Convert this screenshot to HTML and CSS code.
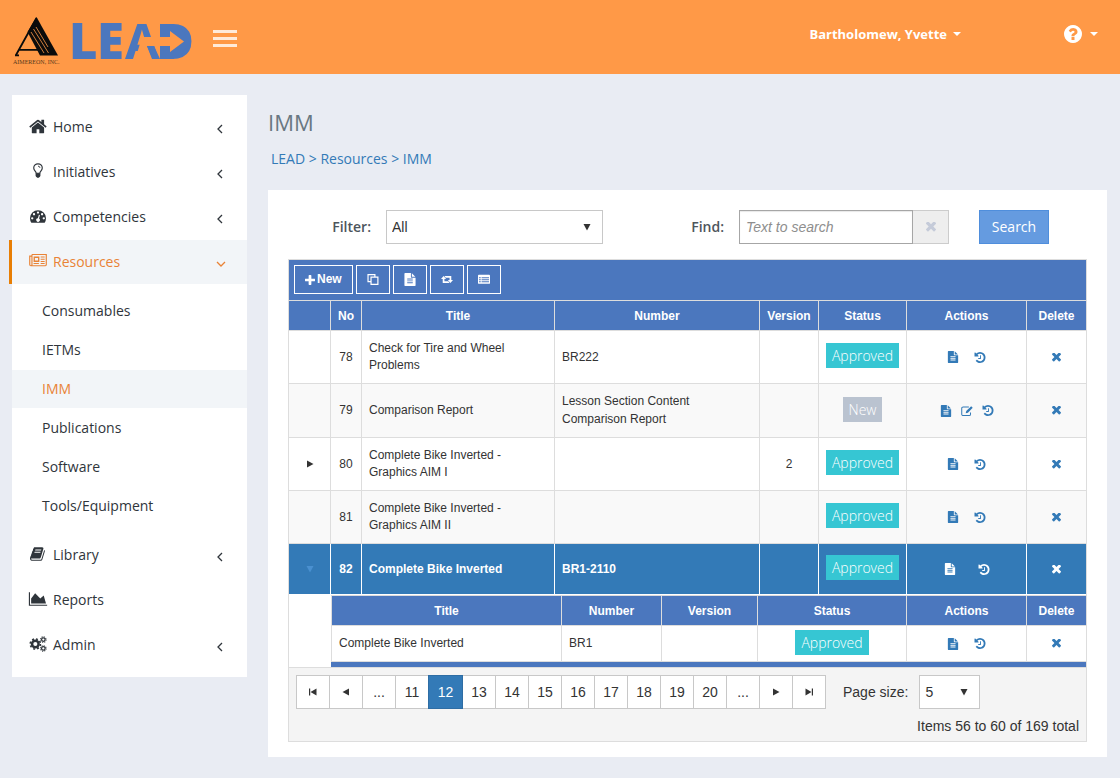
FILE: index.html
```html
<!DOCTYPE html>
<html lang="en">
<head>
<meta charset="utf-8">
<title>IMM - LEAD</title>
<link rel="stylesheet" href="styles.css">
</head>
<body>
<svg class="sprite" aria-hidden="true">
  <symbol id="i-home" viewBox="60 100 1680 1500"><path d="M1472 992v480q0 26-19 45t-45 19h-384v-384h-256v384h-384q-26 0-45-19t-19-45v-480q0-1 .5-3t.5-3l575-474 575 474q1 2 1 6zm223-69l-62 74q-8 9-21 11h-3q-13 0-21-7l-692-577-692 577q-12 8-24 7-13-2-21-11l-62-74q-8-10-7-23.500t11-21.500l719-599q32-26 76-26t76 26l244 204v-195q0-14 9-23t23-9h192q14 0 23 9t9 23v408l219 182q10 8 11 21.500t-7 23.500z"/></symbol>
  <symbol id="i-bulb" viewBox="0 0 20 18"><path fill="none" stroke="currentColor" stroke-width="1.300" d="M8 11.500C7.800 9.500 5.200 8.500 5.200 5.600a4.800 4.700 0 0 1 9.600 0c0 2.900-2.600 3.900-2.800 5.900z"/><path fill="none" stroke="currentColor" d="M10 3.500q2 0 2.200 2"/><path d="M7.300 11.500h5.400v3.200l-1 1.300h-.7l-.5.800h-1l-.5-.8h-.7l-1-1.300z"/></symbol>
  <symbol id="i-dash" viewBox="0 0 20 18"><path fill-rule="evenodd" d="M2.500 16.500A9 9 0 0 1 1 11.500a9 9 0 0 1 18 0 9 9 0 0 1-1.500 5zM3.500 10.300a1.300 1.300 0 1 0 0 2.600 1.300 1.300 0 0 0 0-2.600zM5.500 5.700a1.300 1.300 0 1 0 0 2.600 1.300 1.300 0 0 0 0-2.600zM10 3.800a1.300 1.300 0 1 0 0 2.600 1.300 1.300 0 0 0 0-2.600zM14.600 5.700a1.300 1.300 0 1 0 0 2.600 1.300 1.300 0 0 0 0-2.600zM16.500 10.300a1.300 1.300 0 1 0 0 2.600 1.300 1.300 0 0 0 0-2.600zM11 7.500l-1.100 4a2 2 0 1 0 1.300.4l1-4z"/></symbol>
  <symbol id="i-news" viewBox="0 0 20 18"><path fill="none" stroke="currentColor" stroke-width="1.300" d="M3.200 1.700h16.100v11.600a1 1 0 0 1-1 1H2a1.300 1.300 0 0 1-1.300-1.300V3.500h2.500M3.200 1.700V13a1.200 1.200 0 0 1-1.200 1.300"/><path fill="none" stroke="currentColor" stroke-width="1.500" d="M5.800 4.800h5v4.500h-5z"/><path fill="none" stroke="currentColor" stroke-width="1.200" d="M13 4.500h4.500M13 7h4.500M13 9.500h4.500M5 11.800h6M13 11.800h4.500"/></symbol>
  <symbol id="i-book" viewBox="0 0 1792 1792"><path d="M1639 478q40 57 18 129l-275 906q-19 64-76.500 107.500t-122.500 43.500h-923q-77 0-148.500-53.500t-99.500-131.500q-24-67-2-127 0-4 3-27t4-37q1-8-3-21.500t-3-19.500q2-11 8-21t16.500-23.500 16.500-23.500q23-38 45-91.500t30-91.500q3-10 .5-30t-.5-28q3-11 17-28t17-23q21-36 42-92t25-90q1-9-2.500-32t.5-28q4-13 22-30.500t22-22.500q19-26 42.500-84.500t27.500-96.500q1-8-3-25.500t-2-26.500q2-8 9-18t18-23 17-21q8-12 16.500-30.500t15-35 16-36 19.500-32 26.500-23.500 36-11.500 47.500 5.500l-1 3q38-9 51-9h761q74 0 114 56t18 130l-274 906q-36 119-71.500 153.500t-128.500 34.500h-869q-27 0-38 15-11 16-1 43 24 70 144 70h923q29 0 56-15.500t35-41.500l300-987q7-22 5-57 38 15 59 43zm-1064 2q-4 13 2 22.500t20 9.500h608q13 0 25.500-9.500t16.500-22.500l21-64q4-13-2-22.500t-20-9.500h-608q-13 0-25.500 9.500t-16.500 22.500zm-83 256q-4 13 2 22.500t20 9.500h608q13 0 25.500-9.500t16.500-22.500l21-64q4-13-2-22.500t-20-9.500h-608q-13 0-25.500 9.500t-16.500 22.500z"/></symbol>
  <symbol id="i-area" viewBox="0 0 2048 1792"><path d="M2048 1536v128h-2048v-1536h128v1408h1920zm-384-1024l256 896h-1664v-576l448-576 576 576z"/></symbol>
  <symbol id="i-cogs" viewBox="0 0 20 18"><circle cx="7" cy="9" r="3.700" fill="none" stroke="currentColor" stroke-width="2.800"/><circle cx="7" cy="9" r="5.700" fill="none" stroke="currentColor" stroke-width="1.800" stroke-dasharray="2.240 2.240"/><circle cx="16" cy="4" r="2" fill="none" stroke="currentColor" stroke-width="1.400"/><circle cx="16" cy="4" r="3.100" fill="none" stroke="currentColor" stroke-width="1.200" stroke-dasharray="1.220 1.220"/><circle cx="16" cy="14" r="2" fill="none" stroke="currentColor" stroke-width="1.400"/><circle cx="16" cy="14" r="3.100" fill="none" stroke="currentColor" stroke-width="1.200" stroke-dasharray="1.220 1.220"/></symbol>
  <symbol id="i-left" viewBox="0 0 10 10"><path fill="none" stroke="currentColor" stroke-width="1.300" d="M7 1L3 5l4 4"/></symbol>
  <symbol id="i-down" viewBox="0 0 10 10"><path fill="none" stroke="currentColor" stroke-width="1.300" d="M1 3l4 4 4-4"/></symbol>
  <symbol id="i-caret" viewBox="0 0 8 4"><path d="M0 0h8L4 4z"/></symbol>
  <symbol id="i-help" viewBox="128 128 1536 1536"><path d="M1024 1376v-192q0-14-9-23t-23-9h-192q-14 0-23 9t-9 23v192q0 14 9 23t23 9h192q14 0 23-9t9-23zm256-672q0-88-55.500-163t-138.500-116-170-41q-243 0-371 213-15 24 8 42l132 100q7 6 19 6 16 0 25-12 53-68 86-92 34-24 86-24 48 0 85.500 26t37.500 59q0 38-20 61t-68 45q-63 28-115.500 86.500t-52.500 125.500v36q0 14 9 23t23 9h192q14 0 23-9t9-23q0-19 21.500-49.500t54.500-49.500q32-18 49-28.500t46-35 44.500-48 28-60.500 12.500-81zm384 192q0 209-103 385.500t-279.500 279.500-385.500 103-385.500-103-279.500-279.500-103-385.500 103-385.500 279.500-279.500 385.500-103 385.500 103 279.500 279.500 103 385.500z"/></symbol>
  <symbol id="i-plus" viewBox="192 128 1408 1408"><path d="M1600 736v192q0 40-28 68t-68 28h-416v416q0 40-28 68t-68 28h-192q-40 0-68-28t-28-68v-416h-416q-40 0-68-28t-28-68v-192q0-40 28-68t68-28h416v-416q0-40 28-68t68-28h192q40 0 68 28t28 68v416h416q40 0 68 28t28 68z"/></symbol>
  <symbol id="i-times" viewBox="302 434 1188 1188"><path d="M1490 1322q0 40-28 68l-136 136q-28 28-68 28t-68-28l-294-294-294 294q-28 28-68 28t-68-28l-136-136q-28-28-28-68t28-68l294-294-294-294q-28-28-28-68t28-68l136-136q28-28 68-28t68 28l294 294 294-294q28-28 68-28t68 28l136 136q28 28 28 68t-28 68l-294 294 294 294q28 28 28 68z"/></symbol>
  <symbol id="i-file" viewBox="128 0 1536 1792"><path d="M1596 476q14 14 28 36h-472v-472q22 14 36 28zm-476 164h544v1056q0 40-28 68t-68 28h-1344q-40 0-68-28t-28-68v-1600q0-40 28-68t68-28h800v544q0 40 28 68t68 28zm160 736v-64q0-14-9-23t-23-9h-704q-14 0-23 9t-9 23v64q0 14 9 23t23 9h704q14 0 23-9t9-23zm0-256v-64q0-14-9-23t-23-9h-704q-14 0-23 9t-9 23v64q0 14 9 23t23 9h704q14 0 23-9t9-23zm0-256v-64q0-14-9-23t-23-9h-704q-14 0-23 9t-9 23v64q0 14 9 23t23 9h704q14 0 23-9t9-23z"/></symbol>
  <symbol id="i-history" viewBox="128 128 1536 1536"><path d="M1664 896q0 156-61 298t-164 245-245 164-298 61q-172 0-327-72.500t-264-204.500q-7-10-6.500-22.500t8.500-20.500l137-138q10-9 25-9 16 2 23 12 73 95 179 147t225 52q104 0 198.500-40.500t163.500-109.500 109.500-163.500 40.500-198.500-40.500-198.500-109.500-163.500-163.500-109.500-198.500-40.500q-98 0-188 35.500t-160 101.500l137 138q31 30 14 69-17 40-59 40h-448q-26 0-45-19t-19-45v-448q0-42 40-59 39-17 69 14l130 129q107-101 244.500-156.500t284.500-55.500q156 0 298 61t245 164 164 245 61 298zm-640-288v448q0 14-9 23t-23 9h-320q-14 0-23-9t-9-23v-64q0-14 9-23t23-9h224v-352q0-14 9-23t23-9h64q14 0 23 9t9 23z"/></symbol>
  <symbol id="i-edit" viewBox="0 0 13 12"><path fill="none" stroke="currentColor" stroke-width="1.100" d="M8.500 1.600H2.300A1.500 1.500 0 0 0 .8 3.100v6.300a1.500 1.500 0 0 0 1.500 1.500h6.500a1.500 1.500 0 0 0 1.500-1.500V7.500"/><path d="M11 .8l1.700 1.700-5.200 5.300-2.400.7.600-2.500z"/></symbol>
  <symbol id="i-copy" viewBox="0 0 14 14"><path fill="none" stroke="currentColor" stroke-width="1.400" d="M4.700 4.200h8v8.500h-8zM4.500 9.500H1.200V1.200h8v2.500"/></symbol>
  <symbol id="i-retweet" viewBox="0 0 14 10"><path d="M3 1l3 3.500H4V7h4.500l1.500 2H2V4.500H0zM11 9L8 5.500h2V3H5.500L4 1h8v4.500h2z"/></symbol>
  <symbol id="i-list" viewBox="0 0 14 12"><path fill-rule="evenodd" d="M1 .5h12a1 1 0 0 1 1 1v8.500a1 1 0 0 1-1 1H1a1 1 0 0 1-1-1V1.500a1 1 0 0 1 1-1zM1.200 3.500v1h2v-1zm3 0v1h8.600v-1zm-3 2.300v1h2v-1zm3 0v1h8.600v-1zm-3 2.300v1h2v-1zm3 0v1h8.600v-1z"/></symbol>
  <symbol id="i-tri-d" viewBox="0 0 8 8"><path d="M.5 1h7L4 7.500z"/></symbol>
  <symbol id="i-tri-r" viewBox="0 0 8 8"><path d="M1 .5v7L7.500 4z"/></symbol>
  <symbol id="i-tri-l" viewBox="0 0 8 8"><path d="M7 .5v7L.5 4z"/></symbol>
  <symbol id="i-first" viewBox="0 0 8 8"><path d="M0 .5h1.200v7H0zM7.500.5v7L1.500 4z"/></symbol>
  <symbol id="i-last" viewBox="0 0 8 8"><path d="M8 .5H6.800v7H8zM.5.5v7l6-3.500z"/></symbol>
</svg>

<header class="topbar">
  <a class="brand" href="#" aria-label="Aimereon LEAD">
    <svg class="brand-mark" viewBox="0 0 48 52">
      <path fill="#0b0b0b" d="M23.500 2L45 40.500H27L14.500 17z"/>
      <path fill="none" stroke="#0b0b0b" stroke-width="1.800" d="M23.500 3L3 40M6 34.800h20M2 40.300h4"/>
      <path fill="none" stroke="#ff9947" stroke-width=".8" d="M18 17l13 21M20.500 14l15 24M23 12l12 20"/>
      <text x="0" y="49" font-family="Liberation Serif, serif" font-size="6" fill="#5a3a1c">AIMEREON, INC.</text>
    </svg>
    <svg class="brand-word" viewBox="0 0 120 36">
      <g fill="#4b77be" font-family="Open Sans, sans-serif" font-weight="800" font-size="49">
        <text x="-4" y="35">L</text><text x="24" y="35">E</text><text x="52" y="35" font-weight="700">A</text><text x="85" y="35" font-weight="700">D</text>
      </g>
      <path fill="#4b77be" d="M87 0h14v35H87zM96 4h12l5 8v12l-5 7H96z"/>
      <path fill="#ff9947" d="M69 13h28V7l14 10.500L97 28v-6H74l6 14H62z"/>
      <path fill="#4b77be" d="M74 22h7l6 13h-8z"/>
    </svg>
  </a>
  <button class="menu-toggle" type="button" aria-label="Toggle menu"><span></span><span></span><span></span></button>
  <button class="user-menu" type="button">Bartholomew, Yvette <svg class="caret"><use href="#i-caret"/></svg></button>
  <button class="help-menu" type="button" aria-label="Help"><svg class="help-icon"><use href="#i-help"/></svg><svg class="caret"><use href="#i-caret"/></svg></button>
</header>

<div class="layout">
  <nav class="sidebar">
    <a class="nav-item" href="#"><svg class="nav-icon"><use href="#i-home"/></svg><span>Home</span><svg class="chev"><use href="#i-left"/></svg></a>
    <a class="nav-item" href="#"><svg class="nav-icon"><use href="#i-bulb"/></svg><span>Initiatives</span><svg class="chev"><use href="#i-left"/></svg></a>
    <a class="nav-item" href="#"><svg class="nav-icon"><use href="#i-dash"/></svg><span>Competencies</span><svg class="chev"><use href="#i-left"/></svg></a>
    <a class="nav-item active" href="#"><svg class="nav-icon"><use href="#i-news"/></svg><span>Resources</span><svg class="chev"><use href="#i-down"/></svg></a>
    <div class="subnav">
      <a href="#">Consumables</a>
      <a href="#">IETMs</a>
      <a class="current" href="#">IMM</a>
      <a href="#">Publications</a>
      <a href="#">Software</a>
      <a href="#">Tools/Equipment</a>
    </div>
    <a class="nav-item" href="#"><svg class="nav-icon"><use href="#i-book"/></svg><span>Library</span><svg class="chev"><use href="#i-left"/></svg></a>
    <a class="nav-item" href="#"><svg class="nav-icon"><use href="#i-area"/></svg><span>Reports</span></a>
    <a class="nav-item" href="#"><svg class="nav-icon"><use href="#i-cogs"/></svg><span>Admin</span><svg class="chev"><use href="#i-left"/></svg></a>
  </nav>

  <main class="content">
    <h1>IMM</h1>
    <div class="crumbs"><a href="#">LEAD</a> &gt; <a href="#">Resources</a> &gt; <a href="#">IMM</a></div>
    <section class="card">
      <form class="filters">
        <label for="filter">Filter:</label>
        <div class="select-box"><select id="filter"><option>All</option></select><svg class="tri"><use href="#i-tri-d"/></svg></div>
        <label for="find">Find:</label>
        <div class="find-box"><input id="find" type="text" placeholder="Text to search"><button type="button" aria-label="Clear"><svg class="clear-icon"><use href="#i-times"/></svg></button></div>
        <button class="search" type="button">Search</button>
      </form>

      <div class="grid">
        <div class="toolbar">
          <button type="button"><svg class="plus-icon"><use href="#i-plus"/></svg>New</button>
          <button type="button" aria-label="Copy"><svg class="tool-icon"><use href="#i-copy"/></svg></button>
          <button type="button" aria-label="View"><svg class="tool-icon"><use href="#i-file"/></svg></button>
          <button type="button" aria-label="Convert"><svg class="tool-icon"><use href="#i-retweet"/></svg></button>
          <button type="button" aria-label="List"><svg class="tool-icon"><use href="#i-list"/></svg></button>
        </div>
        <table class="data">
          <colgroup><col class="c-exp"><col class="c-no"><col class="c-title"><col><col class="c-ver"><col class="c-status"><col class="c-act"><col class="c-del"></colgroup>
          <thead><tr><th></th><th>No</th><th>Title</th><th>Number</th><th>Version</th><th>Status</th><th>Actions</th><th>Delete</th></tr></thead>
          <tbody>
            <tr>
              <td></td><td class="mid">78</td><td class="title">Check for Tire and Wheel Problems</td><td>BR222</td><td></td>
              <td class="mid status"><span class="badge">Approved</span></td>
              <td><div class="acts"><button type="button" aria-label="View"><svg><use href="#i-file"/></svg></button><button type="button" aria-label="History"><svg><use href="#i-history"/></svg></button></div></td>
              <td class="mid"><button class="del" type="button" aria-label="Delete"><svg><use href="#i-times"/></svg></button></td>
            </tr>
            <tr class="alt">
              <td></td><td class="mid">79</td><td class="title">Comparison Report</td><td class="number">Lesson Section Content Comparison Report</td><td></td>
              <td class="mid status"><span class="badge new">New</span></td>
              <td><div class="acts three"><button type="button" aria-label="View"><svg><use href="#i-file"/></svg></button><button type="button" aria-label="Edit"><svg><use href="#i-edit"/></svg></button><button type="button" aria-label="History"><svg><use href="#i-history"/></svg></button></div></td>
              <td class="mid"><button class="del" type="button" aria-label="Delete"><svg><use href="#i-times"/></svg></button></td>
            </tr>
            <tr>
              <td class="mid"><button class="exp" type="button" aria-label="Expand"><svg><use href="#i-tri-r"/></svg></button></td><td class="mid">80</td><td class="title">Complete Bike Inverted - Graphics AIM I</td><td></td><td class="mid">2</td>
              <td class="mid status"><span class="badge">Approved</span></td>
              <td><div class="acts"><button type="button" aria-label="View"><svg><use href="#i-file"/></svg></button><button type="button" aria-label="History"><svg><use href="#i-history"/></svg></button></div></td>
              <td class="mid"><button class="del" type="button" aria-label="Delete"><svg><use href="#i-times"/></svg></button></td>
            </tr>
            <tr class="alt">
              <td></td><td class="mid">81</td><td class="title">Complete Bike Inverted - Graphics AIM II</td><td></td><td></td>
              <td class="mid status"><span class="badge">Approved</span></td>
              <td><div class="acts"><button type="button" aria-label="View"><svg><use href="#i-file"/></svg></button><button type="button" aria-label="History"><svg><use href="#i-history"/></svg></button></div></td>
              <td class="mid"><button class="del" type="button" aria-label="Delete"><svg><use href="#i-times"/></svg></button></td>
            </tr>
            <tr class="selected">
              <td class="mid"><button class="exp" type="button" aria-label="Collapse"><svg><use href="#i-tri-d"/></svg></button></td><td class="mid">82</td><td>Complete Bike Inverted</td><td>BR1-2110</td><td></td>
              <td class="mid status"><span class="badge">Approved</span></td>
              <td><div class="acts wide"><button type="button" aria-label="View"><svg><use href="#i-file"/></svg></button><button type="button" aria-label="History"><svg><use href="#i-history"/></svg></button></div></td>
              <td class="mid"><button class="del" type="button" aria-label="Delete"><svg><use href="#i-times"/></svg></button></td>
            </tr>
            <tr class="detail">
              <td></td>
              <td colspan="7">
                <table class="data nested">
                  <colgroup><col><col class="n-num"><col class="n-ver"><col class="n-status"><col class="c-act"><col class="c-del"></colgroup>
                  <thead><tr><th>Title</th><th>Number</th><th>Version</th><th>Status</th><th>Actions</th><th>Delete</th></tr></thead>
                  <tbody><tr>
                    <td>Complete Bike Inverted</td><td>BR1</td><td></td><td class="mid status"><span class="badge">Approved</span></td>
                    <td><div class="acts"><button type="button" aria-label="View"><svg><use href="#i-file"/></svg></button><button type="button" aria-label="History"><svg><use href="#i-history"/></svg></button></div></td>
                    <td class="mid"><button class="del" type="button" aria-label="Delete"><svg><use href="#i-times"/></svg></button></td>
                  </tr></tbody>
                </table>
              </td>
            </tr>
          </tbody>
        </table>
        <div class="pager">
          <div class="pages">
            <button type="button" aria-label="First page"><svg><use href="#i-first"/></svg></button><button type="button" aria-label="Previous page"><svg><use href="#i-tri-l"/></svg></button><button type="button">...</button><button type="button">11</button><button class="on" type="button">12</button><button type="button">13</button><button type="button">14</button><button type="button">15</button><button type="button">16</button><button type="button">17</button><button type="button">18</button><button type="button">19</button><button type="button">20</button><button type="button">...</button><button type="button" aria-label="Next page"><svg><use href="#i-tri-r"/></svg></button><button type="button" aria-label="Last page"><svg><use href="#i-last"/></svg></button>
          </div>
          <label for="size">Page size:</label>
          <div class="select-box size"><select id="size"><option>5</option></select><svg class="tri"><use href="#i-tri-d"/></svg></div>
          <div class="summary">Items 56 to 60 of 169 total</div>
        </div>
      </div>
    </section>
  </main>
</div>
</body>
</html>
```
FILE: styles.css
```css
* { box-sizing: border-box; }
body {
  margin: 0;
  background: #e9ecf3;
  color: #333;
  font: 14px/20px "Open Sans", sans-serif;
}
a { text-decoration: none; color: inherit; }
button { font: inherit; color: inherit; background: none; border: 0; padding: 0; cursor: pointer; }
svg { display: block; fill: currentColor; }
.sprite { position: absolute; width: 0; height: 0; }

/* Top bar */
.topbar {
  display: flex;
  align-items: flex-start;
  height: 74px;
  padding: 0 22px 0 13px;
  background: #ff9947;
  color: #fff;
}
.brand { display: flex; gap: 12px; padding-top: 15px; }
.brand-mark { width: 48px; height: 52px; }
.brand-word { width: 120px; height: 36px; margin-top: 9px; overflow: visible; }
.menu-toggle { display: grid; gap: 4px; width: 24px; margin: 30px auto 0 20px; }
.menu-toggle span { height: 3px; background: #ffead9; }
.user-menu { display: flex; align-items: center; gap: 6px; margin-top: 24px; font-size: 13px; font-weight: 700; }
.caret { width: 8px; height: 4px; }
.help-menu { display: flex; align-items: center; gap: 8px; margin: 25px 0 0 103px; }
.help-icon { width: 18px; height: 18px; }

/* Sidebar */
.layout { display: flex; align-items: flex-start; gap: 21px; padding: 21px 13px 21px 12px; }
.sidebar { flex: 0 0 235px; padding: 10px 0; background: #fff; color: #2f353b; }
.nav-item { display: flex; align-items: center; height: 44px; margin-bottom: 1px; padding: 0 22px 0 16px; }
.nav-item:last-child { margin-bottom: 0; }
.nav-icon { width: 20px; height: 16px; margin: 0 5px 2px 0; }
.chev { width: 10px; height: 10px; margin: 4px 0 0 auto; }
.nav-item.active { margin-left: -3px; border-left: 3px solid #e87e04; background: #f2f5f8; color: #e98336; }
.nav-item.active .chev { margin-right: -1px; }
.subnav { padding: 7px 0; }
.subnav a { display: block; margin-bottom: 1px; padding: 9px 30px; }
.subnav .current { background: #f2f5f8; color: #e98336; }

/* Content */
.content { flex: 1; min-width: 0; padding-top: 12px; }
h1 { margin: 0; color: #697882; font-size: 22px; font-weight: 400; line-height: 30px; }
.crumbs { margin: 12px 3px 21px; color: #337ab7; }
.card { padding: 20px 20px 15px; background: #fff; }

.filters {
  display: grid;
  grid-template-columns: 83px 217px 1fr 210px 85px;
  align-items: center;
  gap: 15px;
  padding-right: 38px;
  margin-bottom: 15px;
}
.filters label { text-align: right; font-weight: 600; color: #4d555c; }
.select-box { position: relative; }
.select-box select {
  appearance: none;
  width: 100%;
  height: 34px;
  padding: 0 5px;
  border: 1px solid #c8c8c8;
  border-radius: 0;
  background: #fff;
  color: #333;
  font: 14px "Liberation Sans", sans-serif;
}
.tri { position: absolute; right: 12px; top: 13px; width: 8px; height: 8px; pointer-events: none; }
.find-box { display: flex; }
.find-box input {
  flex: 1;
  min-width: 0;
  height: 34px;
  padding: 0 6px;
  border: 1px solid #a6a6a6;
  font: 14px "Liberation Sans", sans-serif;
  box-shadow: inset 0 1px 1px #e8e8e8;
}
.find-box input::placeholder { color: #8e8e8e; font-style: italic; }
.find-box button { display: grid; place-items: center; width: 36px; border: 1px solid #ccc; border-left: 0; background: #eee; color: #c5cbd9; }
.clear-icon { width: 10px; height: 10px; }
.search { height: 34px; margin-left: 15px; border: 1px solid #4f8edc; background: #659be0; color: #fff; }

/* Data grid */
.grid { border: 1px solid #ddd; font: 12px/17px "Liberation Sans", sans-serif; }
.toolbar { display: flex; gap: 3px; padding: 5px 5px 6px; background: #4b77be; border-bottom: 1px solid #ddd; color: #fff; }
.toolbar button { display: flex; align-items: center; gap: 2px; height: 29px; padding: 0 10px; border: 1px solid #fff; font-weight: bold; }
.plus-icon { width: 10px; height: 10px; }
.tool-icon { width: 12px; height: 13px; }
.data { width: 100%; table-layout: fixed; border-collapse: separate; border-spacing: 0; }
.c-exp { width: 42px; }
.c-no { width: 31px; }
.c-title { width: 193px; }
.c-ver { width: 59px; }
.c-status { width: 88px; }
.c-act { width: 120px; }
.c-del { width: 59px; }
.n-num { width: 100px; }
.n-ver { width: 96px; }
.n-status { width: 149px; }
.data th { height: 30px; padding: 1px 0 0; background: #4b77be; color: #fff; border: solid #ddd; border-width: 0 1px 1px 0; }
.data td { height: 53px; padding: 0 7px; border: solid #ddd; border-width: 0 1px 1px 0; }
.data th:last-child, .data td:last-child { border-right: 0; }
.data .mid { padding: 0; text-align: center; }
.data .status { padding-bottom: 3px; }
.data .title { padding-right: 40px; }
.data .number { height: 54px; padding-right: 50px; padding-bottom: 1px; line-height: 18px; }
.alt { background: #f9f9f9; }
.badge { display: inline-block; padding: 0 6px; background: #36c6d3; color: #fff; font: 300 14px/25px "Open Sans", sans-serif; }
.badge.new { background: #bac3d0; }
.acts { display: flex; justify-content: center; gap: 15px; color: #337ab7; }
.acts.three { gap: 9px; }
.acts.wide { gap: 22px; }
.acts svg { width: 12px; height: 12px; }
.acts button:last-child svg { height: 11px; }
.del { color: #337ab7; vertical-align: middle; }
.del svg { width: 9px; height: 9px; }
.exp { vertical-align: middle; }
.exp svg { width: 8px; height: 8px; }
.data .selected td { height: 51px; background: #337ab7; border-color: #fff; color: #fff; font-weight: bold; }
.selected .acts, .selected .del { color: #fff; }
.selected .exp { color: #4a90d0; }
.data .detail > td { height: auto; padding: 0; border-right: 0; }
.data .nested { border: solid #ddd; border-width: 1px 0 0 1px; }
.data .nested td { height: 36px; }
.detail > td:last-child::after { content: ""; display: block; height: 5px; background: #4b77be; }

/* Pager */
.pager { display: flex; flex-wrap: wrap; align-items: center; padding: 7px 7px 5px; background: #f4f4f4; font-size: 14px; line-height: 20px; }
.pages { display: flex; }
.pages button { display: grid; place-items: center; width: 34px; height: 34px; margin-right: -1px; border: 1px solid #c8c8c8; background: #fff; }
.pages .on { position: relative; width: 35px; border-color: #2e6da4; background: #337ab7; color: #fff; }
.pages svg { width: 8px; height: 8px; }
.pager label { margin: 0 11px 0 18px; }
.size { width: 61px; }
.summary { flex: 0 0 100%; margin-top: 7px; text-align: right; }
```
